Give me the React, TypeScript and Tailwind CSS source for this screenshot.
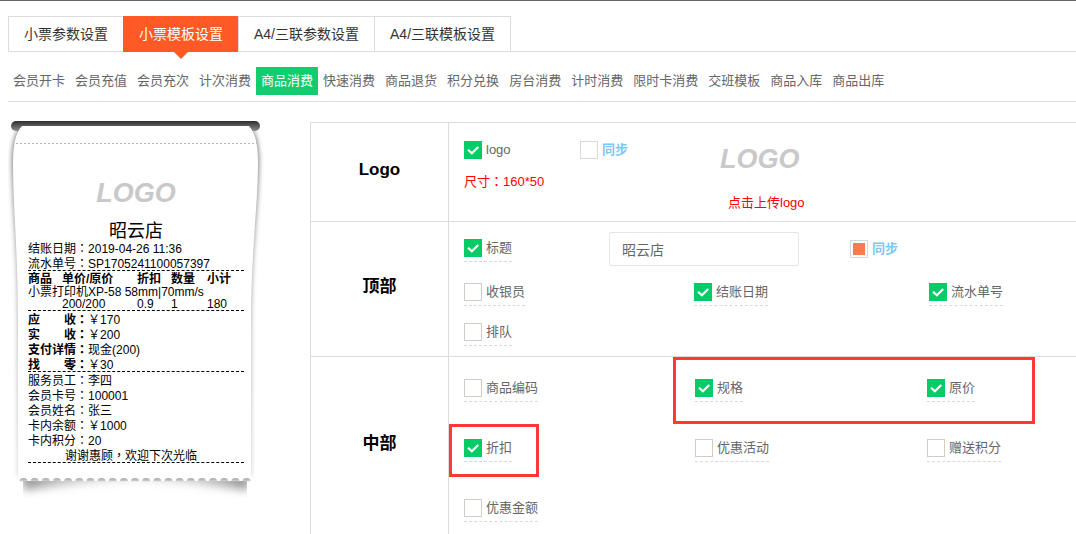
import { useState, type ReactNode } from "react";
import clsx from "clsx";

const mainTabs = ["小票参数设置", "小票模板设置", "A4/三联参数设置", "A4/三联模板设置"];

const templates = [
  "会员开卡", "会员充值", "会员充次", "计次消费", "商品消费", "快速消费", "商品退货",
  "积分兑换", "房台消费", "计时消费", "限时卡消费", "交班模板", "商品入库", "商品出库",
];

const amounts = [
  { label: "应　　收", value: "￥170" },
  { label: "实　　收", value: "￥200" },
  { label: "支付详情", value: "现金(200)" },
  { label: "找　　零", value: "￥30" },
];

const memberInfo = [
  { label: "服务员工", value: "李四" },
  { label: "会员卡号", value: "100001" },
  { label: "会员姓名", value: "张三" },
  { label: "卡内余额", value: "￥1000" },
  { label: "卡内积分", value: "20" },
];

// Centres of the notches along the torn edge
const notches = Array.from({ length: 21 }, (_, i) => 15.5 + i * 11.15);

// Full-width punctuation centred in its box
const Mark = ({ children }: { children: ReactNode }) => (
  <span className="font-['Liberation_Sans','Noto_Sans_CJK_TC',sans-serif]">{children}</span>
);

const Logo = () => (
  <span className="block text-[27px] leading-7 font-bold italic text-[#c9c9c9]">LOGO</span>
);

const CheckItem = ({ label, checked = false, underline = true }: { label: string; checked?: boolean; underline?: boolean }) => (
  <label className={clsx("inline-flex items-center gap-1 h-[23px] pb-1 justify-self-start text-[13px] leading-[18px] text-[#666]", underline && "border-b border-dashed border-[#d9d9d9]")}>
    <span className="grid size-[18px]">
      <input
        type="checkbox"
        defaultChecked={checked}
        className="peer col-start-1 row-start-1 size-[18px] appearance-none border border-[#d2ccc6] bg-white checked:border-[#05cc66] checked:bg-[#05cc66]"
      />
      <svg viewBox="0 0 18 18" className="pointer-events-none col-start-1 row-start-1 size-[18px] opacity-0 peer-checked:opacity-100" fill="none" stroke="#fff" strokeWidth="2.2">
        <path d="M4 8.8 L7.9 12.3 L14.2 6" />
      </svg>
    </span>
    {label}
  </label>
);

const SyncItem = ({ checked = false }: { checked?: boolean }) => (
  <label className="inline-flex items-center gap-1 text-[13px] leading-[18px] font-bold text-[#7ac8f5]">
    <input
      type="checkbox"
      defaultChecked={checked}
      className="size-[18px] appearance-none border border-[#d9d9d9] bg-white bg-clip-content p-0.5 checked:bg-[#ff7a4d]"
    />
    同步
  </label>
);

const Section = ({ title, children }: { title: string; children: ReactNode }) => (
  <section className="grid grid-cols-[137px_1fr] border-t border-l border-[#dcdcdc]">
    <h2 className="flex items-center justify-center pb-1 text-[17px] font-bold text-black">{title}</h2>
    <div className="border-l border-[#dcdcdc] pl-[15px]">{children}</div>
  </section>
);

const ReceiptPaper = () => (
  <svg viewBox="0 0 256 400" className="absolute top-0 left-0 h-[400px] w-64" aria-hidden="true">
    <defs>
      <linearGradient id="slot" x1="0" y1="0" x2="0" y2="1">
        <stop offset="0" stopColor="#2e2e2e" />
        <stop offset="1" stopColor="#8a8a8a" />
      </linearGradient>
      <linearGradient id="curl" x1="0" y1="0" x2="0" y2="1">
        <stop offset="0" stopColor="#777" />
        <stop offset="0.4" stopColor="#999" />
        <stop offset="1" stopColor="#ccc" />
      </linearGradient>
      <linearGradient id="notch" x1="0" y1="0" x2="0" y2="1">
        <stop offset="0" stopColor="#a6a6a6" />
        <stop offset="1" stopColor="#d0d0d0" />
      </linearGradient>
      <linearGradient id="foot" x1="0" y1="0" x2="1" y2="0">
        <stop offset="0" stopColor="#666" stopOpacity="0.75" />
        <stop offset="0.25" stopColor="#888" stopOpacity="0.45" />
        <stop offset="0.5" stopColor="#999" stopOpacity="0.3" />
        <stop offset="0.75" stopColor="#888" stopOpacity="0.45" />
        <stop offset="1" stopColor="#666" stopOpacity="0.75" />
      </linearGradient>
      <filter id="soft" x="-10%" y="-10%" width="120%" height="120%">
        <feGaussianBlur stdDeviation="2.5" />
      </filter>
      <filter id="softer" x="-10%" y="-80%" width="120%" height="260%">
        <feGaussianBlur stdDeviation="5" />
      </filter>
      <clipPath id="below">
        <rect x="15" y="374" width="224" height="22" />
      </clipPath>
    </defs>
    <g clipPath="url(#below)">
      <path d="M12 360 H244 L240 388 Q190 380 128 377 Q66 380 16 388 Z" fill="url(#foot)" filter="url(#softer)" />
    </g>
    <path
      d="M12 26 C5 34 4 50 4 62 C5 110 10 150 10 220 V374 H243 V220 C243 150 250 110 251 62 C251 50 250 34 243 26 Z"
      fill="url(#curl)"
      filter="url(#soft)"
    />
    <rect x="3" y="19" width="249" height="10" rx="5" fill="url(#slot)" />
    <path
      d="M14 24 C8 30 5 42 5 60 C5 105 10 150 10 220 V379 H243 V220 C243 150 250 105 250 60 C250 42 247 30 241 24 Z"
      fill="#fff"
    />
    <path d="M8 41.5 H249" stroke="#b5b5b5" strokeDasharray="2 2" />
    {notches.map((x) => (
      <path key={x} d={`M${x - 4} 379.2 A4 3.2 0 0 1 ${x + 4} 379.2 Z`} fill="url(#notch)" />
    ))}
  </svg>
);

const Receipt = () => (
  <aside className="relative h-[400px] w-64 shrink-0">
    <ReceiptPaper />
    <div className="relative mx-5 pt-[77px] text-xs leading-[15px] text-black">
      <div className="flex justify-center">
        <Logo />
      </div>
      <p className="mt-3.5 text-center text-lg leading-[21px]">昭云店</p>
      <p>结账日期<Mark>：</Mark>2019-04-26 11:36</p>
      <p className="h-3.5 border-b border-dashed border-black">流水单号<Mark>：</Mark>SP1705241100057397</p>
      <table className="w-full table-fixed text-left leading-3">
        <colgroup>
          <col className="w-[34px]" />
          <col className="w-[75px]" />
          <col className="w-[34px]" />
          <col className="w-9" />
          <col />
        </colgroup>
        <thead>
          <tr className="leading-[13px]">
            <th className="pt-0.5">商品</th>
            <th className="pt-0.5">单价/原价</th>
            <th className="pt-0.5">折扣</th>
            <th className="pt-0.5">数量</th>
            <th className="pt-0.5">小计</th>
          </tr>
        </thead>
        <tbody>
          <tr>
            <td colSpan={5}>小票打印机XP-58 58mm|70mm/s</td>
          </tr>
          <tr>
            <td />
            <td>200/200</td>
            <td>0.9</td>
            <td>1</td>
            <td>180</td>
          </tr>
        </tbody>
      </table>
      <dl className="h-[62px] border-y border-dashed border-black pt-0.5">
        {amounts.map((row) => (
          <div key={row.label} className="flex h-[15px]">
            <dt className="font-bold">{row.label}<Mark>：</Mark></dt>
            <dd>{row.value}</dd>
          </div>
        ))}
      </dl>
      <dl className="pt-0.5">
        {memberInfo.map((row) => (
          <div key={row.label} className="flex h-[15px]">
            <dt>{row.label}<Mark>：</Mark></dt>
            <dd>{row.value}</dd>
          </div>
        ))}
      </dl>
      <p className="h-3.5 border-b border-dashed border-black pr-2.5 text-center">
        谢谢惠顾<Mark>，</Mark>欢迎下次光临
      </p>
    </div>
  </aside>
);

const Settings = () => (
  <div className="mt-5 min-w-0 flex-1">
    <Section title="Logo">
      <div className="flex h-[98px] items-start pt-[17px]">
        <div className="flex w-[116px] flex-col items-start gap-[9px]">
          <CheckItem label="logo" checked underline={false} />
          <p className="text-[13px] leading-5 text-[#f00]">尺寸<Mark>：</Mark>160*50</p>
        </div>
        <div className="flex w-[140px] pt-px">
          <SyncItem />
        </div>
        <button type="button" className="flex flex-col items-start pt-[5px] text-[13px] leading-5 text-[#f00]">
          <Logo />
          <span className="mt-5 pl-2">点击上传logo</span>
        </button>
      </div>
    </Section>

    <Section title="顶部">
      <div className="h-[134px] pt-2.5">
        <div className="flex h-[34px] items-center">
          <div className="flex w-[145px] pt-[3px]">
            <CheckItem label="标题" checked />
          </div>
          <input
            type="text"
            aria-label="标题"
            defaultValue="昭云店"
            className="h-[34px] w-[190px] rounded-xs border border-[#e6e6e6] px-3 text-sm text-[#666]"
          />
          <div className="ml-[51px] flex">
            <SyncItem checked />
          </div>
        </div>
        <div className="mt-[17px] grid grid-cols-[230fr_235fr_147fr] gap-y-[17px]">
          <CheckItem label="收银员" />
          <CheckItem label="结账日期" checked />
          <CheckItem label="流水单号" checked />
          <CheckItem label="排队" />
        </div>
      </div>
    </Section>

    <Section title="中部">
      <div className="relative grid h-[177px] grid-cols-[231fr_232fr_149fr] content-start gap-y-[37px] pt-[22px]">
        <CheckItem label="商品编码" />
        <CheckItem label="规格" checked />
        <CheckItem label="原价" checked />
        <CheckItem label="折扣" checked />
        <CheckItem label="优惠活动" />
        <CheckItem label="赠送积分" />
        <CheckItem label="优惠金额" />
        {/* Highlight frames */}
        <div className="pointer-events-none absolute top-0 right-[41px] left-[209px] h-[67px] border-3 border-[#ff3838]" />
        <div className="pointer-events-none absolute top-[67px] -left-[15px] h-[53px] w-[90px] border-3 border-[#ff3838]" />
      </div>
    </Section>
  </div>
);

const App = () => {
  const [tab, setTab] = useState(1);
  const [template, setTemplate] = useState(4);

  return (
    <div className="overflow-hidden border-t border-[#666] bg-white pl-2 font-['Liberation_Sans','Noto_Sans_CJK_SC',sans-serif]">
      {/* Main tabs */}
      <nav className="mt-[15px] flex h-9 border-b border-[#dcdcdc]">
        {mainTabs.map((name, i) => (
          <button
            key={name}
            type="button"
            onClick={() => setTab(i)}
            className={clsx(
              "relative h-9 border-t border-l px-[15px] pb-0.5 text-sm last:border-r",
              i === tab ? "border-[#ff5a26] bg-[#ff5a26] text-white" : "border-[#dcdcdc] text-[#333]"
            )}
          >
            {name}
            {i === tab && (
              <span className="absolute top-full left-1/2 -ml-[7px] border-x-7 border-t-7 border-x-transparent border-t-[#ff5a26]" />
            )}
          </button>
        ))}
      </nav>

      {/* Receipt types */}
      <nav className="flex border-b border-[#dcdcdc] pt-[15px] pb-1.5">
        {templates.map((name, i) => (
          <button
            key={name}
            type="button"
            onClick={() => setTemplate(i)}
            className={clsx("h-7 px-[5px] text-[13px] whitespace-nowrap", i === template ? "bg-[#12cd6e] text-white" : "text-[#666]")}
          >
            {name}
          </button>
        ))}
      </nav>

      <main className="flex gap-[46px]">
        <Receipt />
        <Settings />
      </main>
    </div>
  );
};

export default App;
